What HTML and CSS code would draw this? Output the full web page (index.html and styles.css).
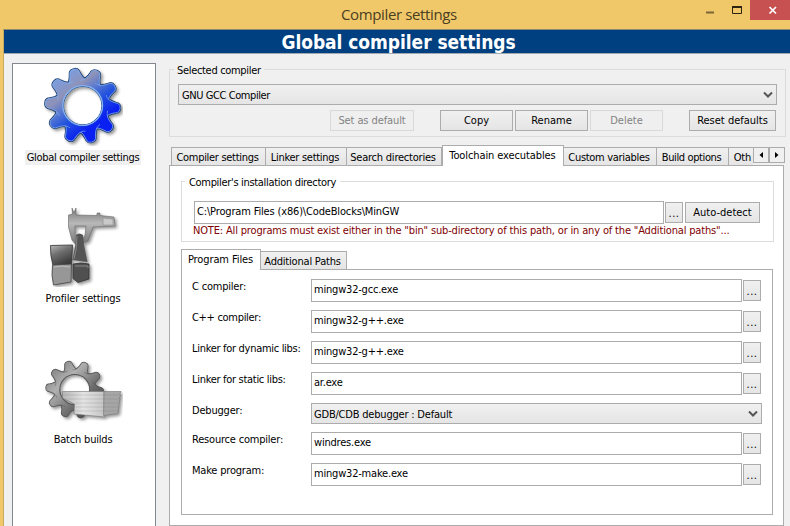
FILE: index.html
```html
<!DOCTYPE html>
<html lang="en">
<head>
<meta charset="utf-8">
<title>Compiler settings</title>
<link rel="stylesheet" href="styles.css">
</head>
<body>
<div class="window">
  <header class="titlebar">
    <span class="title">Compiler settings</span>
    <svg class="controls" width="97" height="20" viewBox="0 0 97 20">
      <path d="M13 12.500h8" stroke="#7b6637" stroke-width="2"/>
      <path d="M39.500 7.500h9v6h-9z" fill="none" stroke="#2b2413"/><path d="M39 7h10" stroke="#2b2413" stroke-width="2"/>
      <path d="M57 0h40v20H57z" fill="#c75050"/>
      <path d="M76.500 7l6.500 6.500M83 7l-6.500 6.500" stroke="#fff" stroke-width="1.700"/>
    </svg>
  </header>
  <div class="client">
    <h1 class="banner"><span>Global compiler settings</span></h1>
    <div class="content">
      <nav class="sidebar">
        <div class="item selected">
          <svg width="80" height="80" viewBox="0 0 80 80">
            <defs>
              <path id="tooth" d="M-12-22.500C-6-25-5.500-31-4.500-35Q-3.500-37.500 0-37.500Q3.500-37.500 4.500-35C5.500-31 6-25 12-22.500z"/>
              <g id="gear">
                <circle r="25.500"/>
                <use href="#tooth" transform="rotate(-14)"/><use href="#tooth" transform="rotate(22)"/>
                <use href="#tooth" transform="rotate(58)"/><use href="#tooth" transform="rotate(94)"/>
                <use href="#tooth" transform="rotate(130)"/><use href="#tooth" transform="rotate(166)"/>
                <use href="#tooth" transform="rotate(202)"/><use href="#tooth" transform="rotate(238)"/>
                <use href="#tooth" transform="rotate(274)"/><use href="#tooth" transform="rotate(310)"/>
              </g>
              <mask id="hole" maskUnits="userSpaceOnUse" x="-42" y="-42" width="88" height="88">
                <path fill="#fff" d="M-42-42h88v88h-88z"/><circle r="18.700" fill="#000"/>
              </mask>
              <mask id="face" maskUnits="userSpaceOnUse" x="-42" y="-42" width="88" height="88">
                <use href="#gear" fill="#fff" stroke="#000" stroke-width=".6"/><circle r="25.200" fill="#fff"/><circle r="20" fill="#000"/>
              </mask>
              <linearGradient id="blue" x1=".2" y1=".1" x2=".75" y2=".85">
                <stop offset=".1" stop-color="#7f9bd8"/><stop offset=".27" stop-color="#8e92b8"/>
                <stop offset=".4" stop-color="#5b7ad0"/><stop offset=".55" stop-color="#2454dc"/><stop offset=".78" stop-color="#0a20f0"/>
              </linearGradient>
              <linearGradient id="grey" x1=".1" y1=".1" x2=".8" y2=".8">
                <stop offset="0" stop-color="#777"/><stop offset=".35" stop-color="#b0b0b0"/><stop offset=".7" stop-color="#6d6d6d"/><stop offset="1" stop-color="#444"/>
              </linearGradient>
              <linearGradient id="cube" x1="0" y1="0" x2=".5" y2="1">
                <stop offset="0" stop-color="#bbb"/><stop offset=".45" stop-color="#707070"/><stop offset="1" stop-color="#3c3c3c"/>
              </linearGradient>
              <linearGradient id="bar" x1="0" y1="0" x2="0" y2="1">
                <stop offset="0" stop-color="#777"/><stop offset=".4" stop-color="#b8b8b8"/><stop offset="1" stop-color="#707070"/>
              </linearGradient>
              <linearGradient id="paper" x1="0" y1="0" x2="1" y2="0">
                <stop offset="0" stop-color="#b5b5b5"/><stop offset=".5" stop-color="#e4e4e4"/><stop offset="1" stop-color="#c5c5c5"/>
              </linearGradient>
            </defs>
            <g transform="translate(39.700 39.600)" class="shadow">
              <g mask="url(#hole)">
                <use href="#gear" fill="#1c3c70" stroke="#1c3c70" stroke-width="2.200"/>
                <use href="#gear" fill="#86b2ee" stroke="#86b2ee" stroke-width=".8"/>
                <circle r="20.200" fill="#86b2ee"/>
                <circle r="19" fill="none" stroke="#234b86"/>
              </g>
              <g mask="url(#face)"><path d="M-42-42h88v88h-88z" fill="url(#blue)"/></g>
              <circle r="19.900" fill="none" stroke="#86b2ee" stroke-width="1.200"/>
            </g>
          </svg>
          <span>Global compiler settings</span>
        </div>
        <div class="item profiler">
          <svg width="80" height="80" viewBox="0 0 80 80">
            <g class="shadow">
              <path d="M29 1l2 5 2-5v7l21 .5V6h3v2.500l14 1.500 1 9-22 1-5 14-5 2v-3l2-5 1-9H32v9l4 9-2 2-5-6-3.500-13V8l4-1z" fill="url(#bar)" stroke="#686868" stroke-width=".6"/>
              <path d="M60 11l10 1v6H60z" fill="#c9c9c9" stroke="#8a8a8a" stroke-width=".6"/>
              <path d="M33 28q3-3 7 0l1 10 3.500 17-15-2 3-16z" fill="#555"/>
              <path d="M34 29l-1 14-2 9" stroke="#888" fill="none"/>
              <path d="M7.500 38.500l22-.5-1 20-18.500.5Q7 48 7.500 38.500z" fill="url(#cube)" stroke="#333" stroke-width=".8"/>
              <path d="M9.500 58l19-1-.5 18-17.500 3Q8 68 9.500 58z" fill="#979797" stroke="#444" stroke-width=".8"/>
              <path d="M11 60q8-2 16 0" stroke="#bebebe" fill="none"/>
              <path d="M30 57q8-2 16 0v15l-11 3.500-5-4z" fill="#505050" stroke="#333" stroke-width=".8"/>
              <path d="M32 59h13v2" stroke="#888" fill="none"/>
            </g>
          </svg>
          <span>Profiler settings</span>
        </div>
        <div class="item">
          <svg width="80" height="80" viewBox="0 0 80 80">
            <g class="shadow">
              <g transform="translate(31.700 41.500) scale(.77)">
                <g mask="url(#hole)"><use href="#gear" fill="#555" stroke="#555" stroke-width="1.500"/></g>
                <g mask="url(#face)"><path d="M-42-42h88v88h-88z" fill="url(#grey)"/></g>
              </g>
              <path d="M19.500 43.500H61l.5 25.500L31 66l.5-10-12-6z" fill="url(#paper)" stroke="#777" stroke-width=".6"/>
              <path d="M61 43.500h17l-1 2 .5 2-1 2 .5 2-1 2 .5 2-1 2 .5 2-1 2 .5 2-1 2-14 2z" fill="#a6a6a6" stroke="#777" stroke-width=".6"/>
              <path d="M20 47h57M24 51h53M32 55h44M32 59h44M32 63h44" stroke="#666" stroke-opacity=".2" fill="none"/>
            </g>
          </svg>
          <span>Batch builds</span>
        </div>
      </nav>
      <main class="main">
        <section class="group selected-compiler">
          <h2 class="legend">Selected compiler</h2>
          <div class="combo"><span>GNU GCC Compiler</span><svg width="10" height="8" viewBox="0 0 10 8"><path d="M1 1.500l4 4 4-4" fill="none" stroke="#555" stroke-width="2"/></svg></div>
          <div class="actions">
            <button class="btn set" disabled>Set as default</button>
            <button class="btn">Copy</button>
            <button class="btn">Rename</button>
            <button class="btn" disabled>Delete</button>
            <button class="btn reset">Reset defaults</button>
          </div>
        </section>
        <div class="tabs">
          <div class="tab t1">Compiler settings</div>
          <div class="tab t2">Linker settings</div>
          <div class="tab t3">Search directories</div>
          <div class="tab t4 active">Toolchain executables</div>
          <div class="tab t5">Custom variables</div>
          <div class="tab t6">Build options</div>
          <div class="tab t7">Oth</div>
          <div class="arrow"><svg width="4" height="6"><path d="M4 0v6L.5 3z"/></svg></div>
          <div class="arrow"><svg width="4" height="6"><path d="M0 0v6l3.500-3z"/></svg></div>
        </div>
        <div class="panel">
          <section class="group directory">
            <h2 class="legend">Compiler's installation directory</h2>
            <div class="path">
              <div class="input">C:\Program Files (x86)\CodeBlocks\MinGW</div>
              <button class="btn dots">...</button>
              <button class="btn detect">Auto-detect</button>
            </div>
            <p class="note">NOTE: All programs must exist either in the "bin" sub-directory of this path, or in any of the "Additional paths"...</p>
          </section>
          <div class="tabs inner">
            <div class="tab p1 active">Program Files</div>
            <div class="tab p2">Additional Paths</div>
          </div>
          <div class="programs">
            <div class="row"><label>C compiler:</label><div class="input">mingw32-gcc.exe</div><button class="btn dots low">...</button></div>
            <div class="row"><label class="tight">C++ compiler:</label><div class="input">mingw32-g++.exe</div><button class="btn dots low">...</button></div>
            <div class="row"><label class="tight">Linker for dynamic libs:</label><div class="input">mingw32-g++.exe</div><button class="btn dots low">...</button></div>
            <div class="row"><label class="tight">Linker for static libs:</label><div class="input">ar.exe</div><button class="btn dots low">...</button></div>
            <div class="row debugger"><label>Debugger:</label><div class="combo"><span>GDB/CDB debugger : Default</span><svg width="10" height="8" viewBox="0 0 10 8"><path d="M1 1.500l4 4 4-4" fill="none" stroke="#555" stroke-width="2"/></svg></div></div>
            <div class="row"><label>Resource compiler:</label><div class="input">windres.exe</div><button class="btn dots low">...</button></div>
            <div class="row"><label>Make program:</label><div class="input">mingw32-make.exe</div><button class="btn dots low">...</button></div>
          </div>
        </div>
      </main>
    </div>
  </div>
</div>
</body>
</html>
```
FILE: styles.css
```css
* { box-sizing: border-box; }
body { margin: 0; overflow: hidden; }
.window {
  width: 790px; height: 526px; overflow: hidden;
  background: #f0c869; color: #000;
  font: 11px/14px "DejaVu Sans Condensed", "DejaVu Sans", sans-serif;
  font-stretch: condensed;
  letter-spacing: -.2px;
  white-space: nowrap;
}
.titlebar { display: flex; height: 29px; padding-left: 341px; justify-content: space-between; }
.title { font: 15px/29px "Open Sans", sans-serif; letter-spacing: -.37px; color: #4a3e22; }
.controls { display: block; }
.client { height: 497px; margin-left: 3px; border-left: 1px solid #c8aa62; border-top: 1px solid #8a8a70; background: #f0f0f0; }
.banner { margin: 0; height: 24px; background: #004080; border-bottom: 1px solid #a0a8b0; color: #fff; text-align: center; font-size: 19px; line-height: 24px; font-weight: bold; letter-spacing: -.05px; padding-left: 3px; }
.content { display: flex; height: 473px; padding-left: 8px; padding-top: 9px; }
.sidebar { width: 144px; height: 480px; border: 1px solid #828790; background: #fff; flex: none; }
.item { height: 141px; display: flex; flex-direction: column; align-items: center; padding: 2px 2px 0 0; }
.item svg { display: block; flex: none; }
.item span { margin-top: 4px; height: 15px; line-height: 16px; padding: 0 1px; }
.item.selected span { background: #f0f0f0; letter-spacing: -.33px; padding: 0 2px; }
.item.profiler span { letter-spacing: -.15px; }
.shadow { filter: drop-shadow(2px 2px 1.5px rgba(0,0,0,.4)); }
.main { width: 618px; margin-left: 13px; flex: none; }
.group { border: 1px solid #dcdcdc; }
.legend { margin: 0; font: inherit; width: max-content; line-height: 16px; height: 14px; letter-spacing: -.32px; }
.selected-compiler { margin-top: 6px; height: 68px; width: 617px; padding: 0 8px; }
.selected-compiler .legend { margin: -7px 0 0 -4px; background: #f0f0f0; padding: 0 3px; }
.combo { display: flex; align-items: center; justify-content: space-between; height: 21px; border: 1px solid #acacac; background: linear-gradient(#f0f0f0, #e5e5e5); padding: 0 3px 0 2px; }
.combo span { padding-top: 2px; }
.combo svg { display: block; flex: none; }
.selected-compiler .combo { margin-top: 7px; width: 599px; letter-spacing: -.42px; padding-left: 3px; }
.actions { display: flex; gap: 2px; margin: 5px 0 0 152px; }
.btn { font: inherit; letter-spacing: 0; height: 21px; width: 73px; margin: 0; padding: 1px 0 0; flex: none; border: 1px solid #acacac; background: linear-gradient(#f0f0f0, #e5e5e5); color: #000; }
.btn:disabled { border-color: #d9d9d9; background: #efefef; color: #838383; }
.btn.set { width: 84px; margin-right: 24px; letter-spacing: -.1px; }
.btn.reset { width: 87px; margin-left: 24px; }
.tabs { display: flex; align-items: flex-start; height: 21px; margin-top: 8px; padding-left: 2px; position: relative; }
.tab { height: 19px; margin-top: 2px; border: 1px solid #acacac; border-left-width: 0; background: linear-gradient(#f0f0f0, #e5e5e5); line-height: 19px; text-align: center; padding-right: 2px; flex: none; overflow: hidden; }
.tab.active { background: #fff; border-left-width: 1px; border-bottom: 0; height: 21px; margin-top: 0; line-height: 19px; letter-spacing: -.1px; padding-right: 1px; position: relative; z-index: 1; }
.t1 { width: 95px; border-left-width: 1px; letter-spacing: -.3px; }
.t2 { width: 81px; letter-spacing: -.28px; }
.t3 { width: 95px; letter-spacing: -.22px; }
.t4 { width: 122px; }
.t5 { width: 93px; letter-spacing: -.3px; }
.t6 { width: 72px; letter-spacing: -.38px; }
.t7 { width: 24px; border-right: 0; text-align: right; padding-right: 2px; }
.arrow { display: flex; align-items: center; justify-content: center; width: 16px; height: 16px; margin-top: 2px; border: 1px solid #acacac; background: #f0f0f0; flex: none; }
.arrow svg { display: block; }
.panel { width: 615px; height: 361px; margin-top: -1px; border: 1px solid #acacac; background: #fff; padding: 15px 0 0 11px; }
.directory { width: 593px; height: 61px; padding-left: 12px; }
.directory .legend { margin: -7px 0 0 -9px; padding: 0 4px; background: #fff; }
.path { display: flex; align-items: center; margin-top: 12px; height: 23px; }
.input { height: 23px; border: 1px solid #acacac; background: #fff; padding-left: 2px; line-height: 19px; }
.path .input { width: 470px; letter-spacing: -.16px; }
.btn.dots { width: 18px; margin-left: 1px; line-height: 17px; letter-spacing: .5px; }
.btn.low { padding-top: 2px; }
.btn.detect { width: 75px; margin-left: 2px; }
.note { margin: 0 0 0 -1px; color: #800000; line-height: 14px; letter-spacing: -.162px; }
.tabs.inner { padding-left: 0; margin-top: 7px; }
.p1 { width: 80px; }
.p2 { width: 86px; }
.programs { width: 592px; height: 246px; margin-top: -1px; border: 1px solid #acacac; padding: 9px 0 0 10px; }
.row { display: flex; height: 31px; }
.row label { width: 119px; flex: none; line-height: 15px; }
.row label.tight { letter-spacing: -.3px; }
.row .input { width: 431px; }
.row .btn { margin-top: 1px; }
.row .combo { width: 451px; }
.row.debugger { height: 29px; }
.row.debugger .combo { height: 21px; }
```
